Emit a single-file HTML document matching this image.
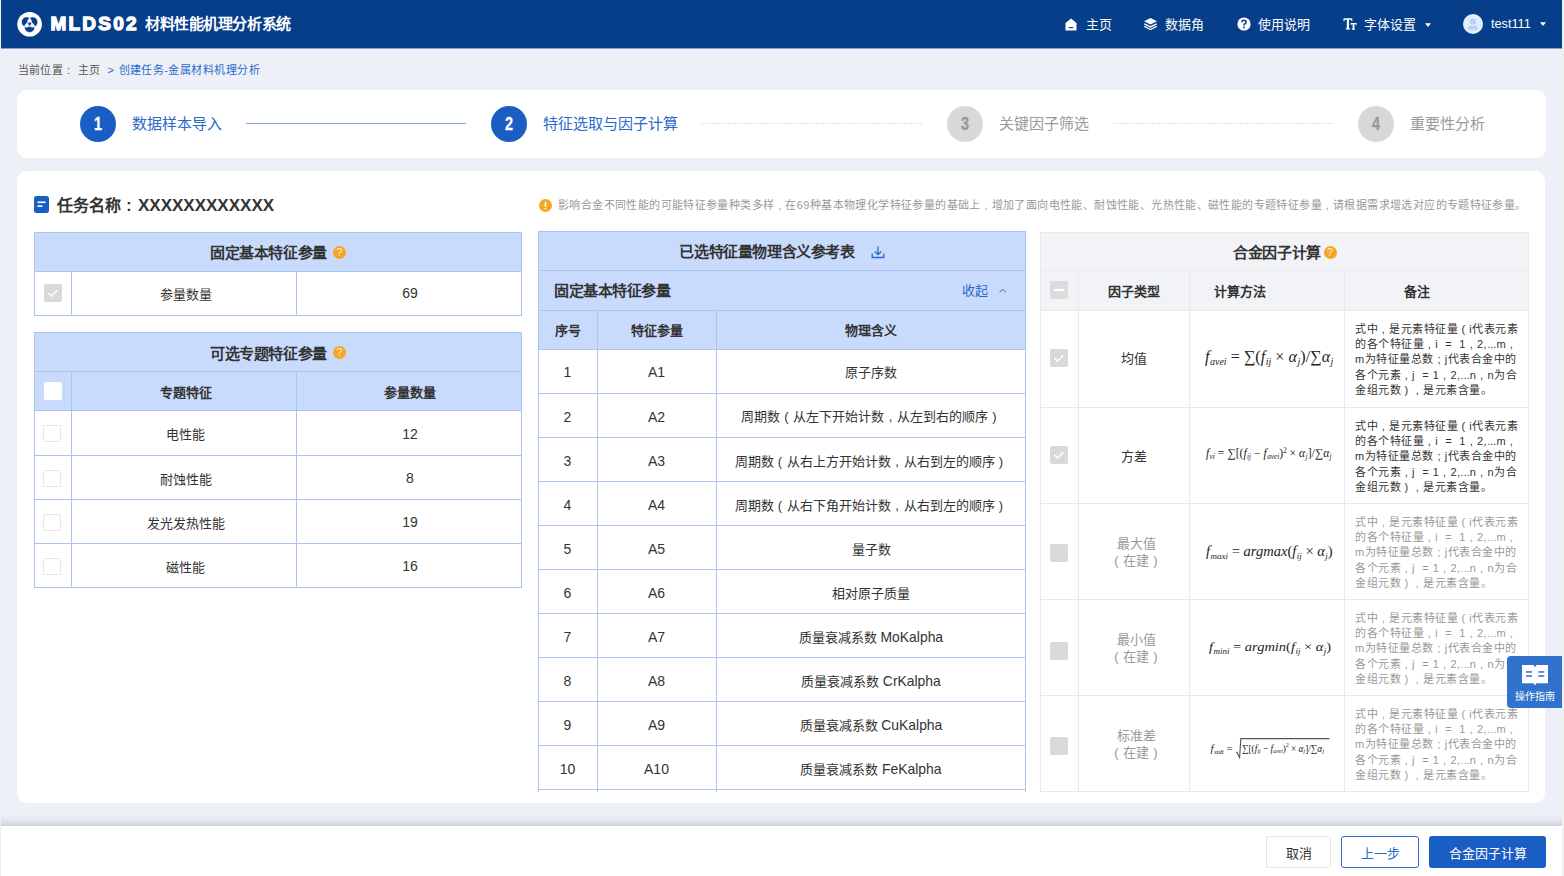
<!DOCTYPE html>
<html lang="zh-CN"><head><meta charset="utf-8">
<style>
*{margin:0;padding:0;box-sizing:border-box}
html,body{width:1564px;height:876px;overflow:hidden}
body{background:#edf0f7;font-family:"Liberation Sans",sans-serif;color:#333;position:relative}
.ab{position:absolute}
.tc{display:flex;align-items:center;justify-content:center;text-align:center;white-space:nowrap}
.b{font-weight:bold}
.qi{border-radius:50%;background:#f5a623;color:#fdf0dc;font-size:10.5px;font-weight:normal;display:flex;align-items:center;justify-content:center;line-height:1}
.cb{border-radius:2px}
.num{font-size:14px}
.fw{display:inline-block;width:1em;text-align:center;font-style:normal}
</style></head><body>

<div class="ab" style="left:0px;top:0px;width:1px;height:876px;background:#efefef;"></div>
<div class="ab" style="left:1562px;top:0px;width:2px;height:876px;background:#f0f0f0;"></div>
<div class="ab" style="left:1px;top:0px;width:1561px;height:48px;background:#063e8a;"></div>
<div class="ab" style="left:1px;top:48px;width:1561px;height:1px;background:#85a0c6;"></div>
<svg class="ab" style="left:17px;top:12px" width="25" height="25" viewBox="0 0 25 25">
<circle cx="12.6" cy="12.2" r="12.3" fill="#fff"/>
<path fill-rule="evenodd" fill="#063e8a" stroke="#fff" stroke-width="0.5" d="M14.67 10.05 A5.1 5.1 0 1 0 4.47 10.05 A5.1 5.1 0 1 0 14.67 10.05 Z M20.73 10.05 A5.1 5.1 0 1 0 10.53 10.05 A5.1 5.1 0 1 0 20.73 10.05 Z M17.70 15.30 A5.1 5.1 0 1 0 7.50 15.30 A5.1 5.1 0 1 0 17.70 15.30 Z"/>
</svg>
<div class="ab" style="left:50.5px;top:11.9px;font-size:19px;font-weight:bold;color:#fff;letter-spacing:2.2px;line-height:24px;-webkit-text-stroke:1.3px #fff">MLDS02</div>
<div class="ab" style="left:145px;top:13px;font-size:15px;letter-spacing:-0.42px;font-weight:bold;color:#fff;line-height:22px">材料性能机理分析系统</div>
<svg class="ab" style="left:1065px;top:18px" width="12" height="13" viewBox="0 0 12 13"><path d="M6 0.5 L11.5 5 L11.5 12 Q11.5 12.5 11 12.5 L1 12.5 Q0.5 12.5 0.5 12 L0.5 5 Z" fill="#fff"/><rect x="3.8" y="9" width="4.4" height="1.2" fill="#063e8a"/></svg>
<div class="ab" style="left:1086px;top:15px;font-size:13px;color:#fff;line-height:20px">主页</div>
<svg class="ab" style="left:1143px;top:17px" width="15" height="14" viewBox="0 0 15 14"><path d="M7.5 1 L14 4.3 L7.5 7.6 L1 4.3 Z" fill="#fff"/><path d="M1.3 6.8 L7.5 9.9 L13.7 6.8" stroke="#fff" stroke-width="1.3" fill="none"/><path d="M1.3 9.4 L7.5 12.5 L13.7 9.4" stroke="#fff" stroke-width="1.3" fill="none"/></svg>
<div class="ab" style="left:1165px;top:15px;font-size:13px;color:#fff;line-height:20px">数据角</div>
<svg class="ab" style="left:1237px;top:17px" width="14" height="14" viewBox="0 0 14 14"><circle cx="7" cy="7" r="6.6" fill="#fff"/><path d="M4.9 5.3 Q4.9 3.2 7 3.2 Q9.1 3.2 9.1 5.1 Q9.1 6.3 7.8 6.9 Q7 7.3 7 8.4" stroke="#063e8a" stroke-width="1.6" fill="none"/><circle cx="7" cy="10.4" r="0.95" fill="#063e8a"/></svg>
<div class="ab" style="left:1258px;top:15px;font-size:13px;color:#fff;line-height:20px">使用说明</div>
<svg class="ab" style="left:1342.5px;top:18.3px" width="15" height="12" viewBox="0 0 15 12"><path fill="#fff" d="M0.5 0.3 H9.3 V3.2 H8.5 L8.1 1.8 H6 V10.2 L7.1 10.6 V11.6 H2.7 V10.6 L3.8 10.2 V1.8 H1.7 L1.3 3.2 H0.5 Z M7.6 5.1 H13.6 V7.2 H13 L12.7 6.3 H11.4 V10.5 L12.1 10.8 V11.7 H8.9 V10.8 L9.6 10.5 V6.3 H8.5 L8.2 7.2 H7.6 Z"/></svg>
<div class="ab" style="left:1364px;top:15px;font-size:13px;color:#fff;line-height:20px">字体设置</div>
<svg class="ab" style="left:1424.5px;top:22.5px" width="6" height="4" viewBox="0 0 6 4"><path d="M0 0.2 L6 0.2 L3 3.9 Z" fill="#fff"/></svg>
<svg class="ab" style="left:1463px;top:14px" width="20" height="20" viewBox="0 0 20 20"><circle cx="10" cy="10" r="10" fill="#e3eefc"/><circle cx="10" cy="7.6" r="3.2" fill="#b9d3f7"/><path d="M4.8 15.8 Q5.2 11.6 8.3 11.3 L10 12.6 L11.7 11.3 Q14.8 11.6 15.2 15.8 Z" fill="#b9d3f7"/></svg>
<div class="ab" style="left:1491px;top:14px;font-size:12.7px;color:#fff;line-height:20px">test111</div>
<svg class="ab" style="left:1540px;top:22px" width="6" height="4" viewBox="0 0 6 4"><path d="M0 0.2 L6 0.2 L3 3.9 Z" fill="#fff"/></svg>
<div class="ab" style="left:17.5px;top:61.8px;font-size:11px;letter-spacing:0.4px;line-height:17px;color:#555;white-space:nowrap">当前位置<span class="fw">:</span></div>
<div class="ab" style="left:77.5px;top:61.8px;font-size:11px;letter-spacing:0.4px;line-height:17px;color:#555;white-space:nowrap">主页</div>
<div class="ab" style="left:107.5px;top:61.8px;font-size:11px;line-height:17px;color:#2a6acb;white-space:nowrap">&gt;</div>
<div class="ab" style="left:118.5px;top:61.8px;font-size:11px;letter-spacing:0.45px;line-height:17px;color:#2a6acb;white-space:nowrap">创建任务-金属材料机理分析</div>
<div class="ab" style="left:17px;top:90px;width:1529px;height:68px;background:#fff;border-radius:10px"></div>
<div class="ab tc" style="left:80px;top:106px;width:36px;height:36px;padding-top:1.5px;border-radius:50%;background:#1a5ec4;color:#fff;font-size:18px;font-weight:bold"><span style="display:inline-block;transform:scaleX(0.8);-webkit-text-stroke:0.3px #fff">1</span></div>
<div class="ab" style="left:132px;top:113px;font-size:15px;line-height:22px;color:#2a6acb;white-space:nowrap">数据样本导入</div>
<div class="ab tc" style="left:491px;top:106px;width:36px;height:36px;padding-top:1.5px;border-radius:50%;background:#1a5ec4;color:#fff;font-size:18px;font-weight:bold"><span style="display:inline-block;transform:scaleX(0.8);-webkit-text-stroke:0.3px #fff">2</span></div>
<div class="ab" style="left:543px;top:113px;font-size:15px;line-height:22px;color:#2a6acb;white-space:nowrap">特征选取与因子计算</div>
<div class="ab tc" style="left:947px;top:106px;width:36px;height:36px;padding-top:1.5px;border-radius:50%;background:#d8d8d8;color:#999;font-size:18px;font-weight:bold"><span style="display:inline-block;transform:scaleX(0.8);-webkit-text-stroke:0.3px #999">3</span></div>
<div class="ab" style="left:999px;top:113px;font-size:15px;line-height:22px;color:#999;white-space:nowrap">关键因子筛选</div>
<div class="ab tc" style="left:1358px;top:106px;width:36px;height:36px;padding-top:1.5px;border-radius:50%;background:#d8d8d8;color:#999;font-size:18px;font-weight:bold"><span style="display:inline-block;transform:scaleX(0.8);-webkit-text-stroke:0.3px #999">4</span></div>
<div class="ab" style="left:1410px;top:113px;font-size:15px;line-height:22px;color:#999;white-space:nowrap">重要性分析</div>
<div class="ab" style="left:246px;top:123px;width:220px;height:1px;background:#7fa6de"></div>
<svg class="ab" style="left:701.5px;top:122px" width="221" height="3"><line x1="0" y1="1.5" x2="221" y2="1.5" stroke="#cfcfcf" stroke-width="1.2" stroke-dasharray="1.3 1.96"/></svg>
<svg class="ab" style="left:1112.5px;top:122px" width="221" height="3"><line x1="0" y1="1.5" x2="221" y2="1.5" stroke="#cfcfcf" stroke-width="1.2" stroke-dasharray="1.3 1.96"/></svg>
<div class="ab" style="left:17px;top:171px;width:1528px;height:632px;background:#fff;border-radius:10px"></div>
<svg class="ab" style="left:34px;top:196px" width="15" height="17" viewBox="0 0 15 17"><rect x="0" y="0" width="15" height="17" rx="2.5" fill="#1a5ec4"/><rect x="3.5" y="5.5" width="8" height="1.6" fill="#fff"/><rect x="3.5" y="9.3" width="5" height="1.6" fill="#fff"/></svg>
<div class="ab" style="left:57px;top:194.8px;font-size:16px;font-weight:bold;line-height:22px;color:#333;white-space:nowrap">任务名称<span class="fw">:</span><span style="font-size:17px;margin-left:1px">XXXXXXXXXXXX</span></div>
<svg class="ab" style="left:539px;top:199px" width="13" height="13" viewBox="0 0 13 13"><circle cx="6.5" cy="6.5" r="6.5" fill="#f5a623"/><rect x="5.7" y="2.8" width="1.6" height="5" rx="0.6" fill="#fff"/><circle cx="6.5" cy="9.6" r="0.9" fill="#fff"/></svg>
<div class="ab" style="left:558px;top:197px;font-size:11px;letter-spacing:0.39px;line-height:17px;color:#999;white-space:nowrap">影响合金不同性能的可能特征参量种类多样<i class=fw>,</i>在69种基本物理化学特征参量的基础上<i class=fw>,</i>增加了面向电性能、耐蚀性能、光热性能、磁性能的专题特征参量<i class=fw>,</i>请根据需求增选对应的专题特征参量。</div>
<div class="ab" style="left:34px;top:232px;width:488px;height:39px;background:#c9dbfd;"></div>
<div class="ab" style="left:34px;top:232px;width:488px;height:1px;background:#acc4f0"></div>
<div class="ab" style="left:34px;top:271px;width:488px;height:1px;background:#acc4f0"></div>
<div class="ab" style="left:34px;top:315px;width:488px;height:1px;background:#acc4f0"></div>
<div class="ab" style="left:34px;top:232px;width:1px;height:84px;background:#acc4f0"></div>
<div class="ab" style="left:521px;top:232px;width:1px;height:84px;background:#acc4f0"></div>
<div class="ab" style="left:71px;top:271px;width:1px;height:44px;background:#acc4f0"></div>
<div class="ab" style="left:296px;top:271px;width:1px;height:44px;background:#acc4f0"></div>
<div class="ab tc b" style="left:34px;top:232px;width:488px;height:39px;font-size:15px;letter-spacing:-0.45px;padding-right:13px"><span>固定基本特征参量<span style="display:inline-block;width:6px"></span></span></div>
<div class="ab qi" style="left:333px;top:245.7px;width:13px;height:13px">?</div>
<div class="ab cb" style="left:44px;top:284px;width:18px;height:18px;background:#d9d9d9"><svg width="18" height="18" viewBox="0 0 18 18"><path d="M4.5 9.2 L7.6 12 L13.3 6.4" stroke="#fff" stroke-width="1.6" fill="none"/></svg></div>
<div class="ab tc " style="left:73px;top:271px;width:225px;height:44px;font-size:13px"><span>参量数量</span></div>
<div class="ab tc num" style="left:297px;top:271px;width:226px;height:44px;"><span>69</span></div>
<div class="ab" style="left:34px;top:332px;width:488px;height:78px;background:#c9dbfd;"></div>
<div class="ab" style="left:34px;top:332px;width:488px;height:1px;background:#acc4f0"></div>
<div class="ab" style="left:34px;top:371px;width:488px;height:1px;background:#acc4f0"></div>
<div class="ab" style="left:34px;top:410px;width:488px;height:1px;background:#acc4f0"></div>
<div class="ab" style="left:34px;top:455px;width:488px;height:1px;background:#acc4f0"></div>
<div class="ab" style="left:34px;top:499px;width:488px;height:1px;background:#acc4f0"></div>
<div class="ab" style="left:34px;top:543px;width:488px;height:1px;background:#acc4f0"></div>
<div class="ab" style="left:34px;top:587px;width:488px;height:1px;background:#acc4f0"></div>
<div class="ab" style="left:34px;top:332px;width:1px;height:256px;background:#acc4f0"></div>
<div class="ab" style="left:521px;top:332px;width:1px;height:256px;background:#acc4f0"></div>
<div class="ab" style="left:71px;top:371px;width:1px;height:216px;background:#acc4f0"></div>
<div class="ab" style="left:296px;top:371px;width:1px;height:216px;background:#acc4f0"></div>
<div class="ab tc b" style="left:34px;top:333px;width:488px;height:39px;font-size:15px;letter-spacing:-0.45px;padding-right:13px"><span>可选专题特征参量<span style="display:inline-block;width:6px"></span></span></div>
<div class="ab qi" style="left:333px;top:345.7px;width:13px;height:13px">?</div>
<div class="ab cb" style="left:44px;top:382px;width:18px;height:18px;background:#fff"></div>
<div class="ab tc b" style="left:73px;top:372px;width:225px;height:39px;font-size:13px"><span>专题特征</span></div>
<div class="ab tc b" style="left:297px;top:372px;width:226px;height:39px;font-size:13px"><span>参量数量</span></div>
<div class="ab cb" style="left:43.3px;top:424.5px;width:17.5px;height:17.5px;background:#fff;border:1px solid #e6e6e6"></div>
<div class="ab tc " style="left:73px;top:411px;width:225px;height:45px;font-size:13px"><span>电性能</span></div>
<div class="ab tc num" style="left:297px;top:411px;width:226px;height:45px;"><span>12</span></div>
<div class="ab cb" style="left:43.3px;top:469.5px;width:17.5px;height:17.5px;background:#fff;border:1px solid #e6e6e6"></div>
<div class="ab tc " style="left:73px;top:456px;width:225px;height:44px;font-size:13px"><span>耐蚀性能</span></div>
<div class="ab tc num" style="left:297px;top:456px;width:226px;height:44px;"><span>8</span></div>
<div class="ab cb" style="left:43.3px;top:513.5px;width:17.5px;height:17.5px;background:#fff;border:1px solid #e6e6e6"></div>
<div class="ab tc " style="left:73px;top:500px;width:225px;height:44px;font-size:13px"><span>发光发热性能</span></div>
<div class="ab tc num" style="left:297px;top:500px;width:226px;height:44px;"><span>19</span></div>
<div class="ab cb" style="left:43.3px;top:557.5px;width:17.5px;height:17.5px;background:#fff;border:1px solid #e6e6e6"></div>
<div class="ab tc " style="left:73px;top:544px;width:225px;height:44px;font-size:13px"><span>磁性能</span></div>
<div class="ab tc num" style="left:297px;top:544px;width:226px;height:44px;"><span>16</span></div>
<div class="ab" style="left:538px;top:231px;width:488px;height:118px;background:#c9dbfd;"></div>
<div class="ab" style="left:538px;top:231px;width:488px;height:1px;background:#acc4f0"></div>
<div class="ab" style="left:538px;top:270px;width:488px;height:1px;background:#acc4f0"></div>
<div class="ab" style="left:538px;top:310px;width:488px;height:1px;background:#acc4f0"></div>
<div class="ab" style="left:538px;top:349px;width:488px;height:1px;background:#acc4f0"></div>
<div class="ab" style="left:538px;top:393px;width:488px;height:1px;background:#acc4f0"></div>
<div class="ab" style="left:538px;top:437px;width:488px;height:1px;background:#acc4f0"></div>
<div class="ab" style="left:538px;top:481px;width:488px;height:1px;background:#acc4f0"></div>
<div class="ab" style="left:538px;top:525px;width:488px;height:1px;background:#acc4f0"></div>
<div class="ab" style="left:538px;top:569px;width:488px;height:1px;background:#acc4f0"></div>
<div class="ab" style="left:538px;top:613px;width:488px;height:1px;background:#acc4f0"></div>
<div class="ab" style="left:538px;top:657px;width:488px;height:1px;background:#acc4f0"></div>
<div class="ab" style="left:538px;top:701px;width:488px;height:1px;background:#acc4f0"></div>
<div class="ab" style="left:538px;top:745px;width:488px;height:1px;background:#acc4f0"></div>
<div class="ab" style="left:538px;top:789px;width:488px;height:1px;background:#acc4f0"></div>
<div class="ab" style="left:538px;top:231px;width:1px;height:561px;background:#acc4f0"></div>
<div class="ab" style="left:1025px;top:231px;width:1px;height:561px;background:#acc4f0"></div>
<div class="ab" style="left:597px;top:310px;width:1px;height:482px;background:#acc4f0"></div>
<div class="ab" style="left:716px;top:310px;width:1px;height:482px;background:#acc4f0"></div>
<div class="ab tc b" style="left:538px;top:231px;width:488px;height:39px;font-size:15px;letter-spacing:-0.4px"><span>已选特征量物理含义参考表<span style="display:inline-block;width:30px"></span></span></div>
<svg class="ab" style="left:871px;top:245px" width="14" height="14" viewBox="0 0 14 14"><path d="M7 1.5 L7 9.5 M3.8 6.5 L7 9.6 L10.2 6.5 M1.2 8.5 L1.2 12.5 L12.8 12.5 L12.8 8.5" stroke="#2a6acb" stroke-width="1.3" fill="none"/></svg>
<div class="ab" style="left:554px;top:280px;font-size:15px;letter-spacing:-0.45px;font-weight:bold;line-height:22px">固定基本特征参量</div>
<div class="ab" style="left:962px;top:282px;font-size:13px;line-height:18px;color:#2a6acb">收起</div>
<svg class="ab" style="left:999px;top:288px" width="7" height="5" viewBox="0 0 7 5"><path d="M0.6 4.3 L3.7 1.3 L6.8 4.3" stroke="#555" stroke-width="0.9" fill="none"/></svg>
<div class="ab tc b" style="left:538px;top:310px;width:59px;height:39px;font-size:13px"><span>序号</span></div>
<div class="ab tc b" style="left:597px;top:310px;width:119px;height:39px;font-size:13px"><span>特征参量</span></div>
<div class="ab tc b" style="left:716px;top:310px;width:310px;height:39px;font-size:13px"><span>物理含义</span></div>
<div class="ab tc num" style="left:538px;top:349.5px;width:59px;height:44.0px;"><span>1</span></div>
<div class="ab tc num" style="left:597px;top:349.5px;width:119px;height:44.0px;"><span>A1</span></div>
<div class="ab tc " style="left:716px;top:349.5px;width:310px;height:44.0px;font-size:13px"><span>原子序数</span></div>
<div class="ab tc num" style="left:538px;top:395px;width:59px;height:44px;"><span>2</span></div>
<div class="ab tc num" style="left:597px;top:395px;width:119px;height:44px;"><span>A2</span></div>
<div class="ab tc " style="left:716px;top:393px;width:310px;height:44px;font-size:13px"><span>周期数<i class=fw>(</i>从左下开始计数<i class=fw>,</i>从左到右的顺序<i class=fw>)</i></span></div>
<div class="ab tc num" style="left:538px;top:439px;width:59px;height:44px;"><span>3</span></div>
<div class="ab tc num" style="left:597px;top:439px;width:119px;height:44px;"><span>A3</span></div>
<div class="ab tc " style="left:716px;top:438px;width:310px;height:44px;font-size:13px"><span>周期数<i class=fw>(</i>从右上方开始计数<i class=fw>,</i>从右到左的顺序<i class=fw>)</i></span></div>
<div class="ab tc num" style="left:538px;top:483px;width:59px;height:44px;"><span>4</span></div>
<div class="ab tc num" style="left:597px;top:483px;width:119px;height:44px;"><span>A4</span></div>
<div class="ab tc " style="left:716px;top:482px;width:310px;height:44px;font-size:13px"><span>周期数<i class=fw>(</i>从右下角开始计数<i class=fw>,</i>从右到左的顺序<i class=fw>)</i></span></div>
<div class="ab tc num" style="left:538px;top:527px;width:59px;height:44px;"><span>5</span></div>
<div class="ab tc num" style="left:597px;top:527px;width:119px;height:44px;"><span>A5</span></div>
<div class="ab tc " style="left:716px;top:526px;width:310px;height:44px;font-size:13px"><span>量子数</span></div>
<div class="ab tc num" style="left:538px;top:571px;width:59px;height:44px;"><span>6</span></div>
<div class="ab tc num" style="left:597px;top:571px;width:119px;height:44px;"><span>A6</span></div>
<div class="ab tc " style="left:716px;top:570px;width:310px;height:44px;font-size:13px"><span>相对原子质量</span></div>
<div class="ab tc num" style="left:538px;top:615px;width:59px;height:44px;"><span>7</span></div>
<div class="ab tc num" style="left:597px;top:615px;width:119px;height:44px;"><span>A7</span></div>
<div class="ab tc " style="left:716px;top:614px;width:310px;height:44px;font-size:13px"><span>质量衰减系数 <span style="font-size:13.9px">MoKalpha</span></span></div>
<div class="ab tc num" style="left:538px;top:659px;width:59px;height:44px;"><span>8</span></div>
<div class="ab tc num" style="left:597px;top:659px;width:119px;height:44px;"><span>A8</span></div>
<div class="ab tc " style="left:716px;top:658px;width:310px;height:44px;font-size:13px"><span>质量衰减系数 <span style="font-size:13.9px">CrKalpha</span></span></div>
<div class="ab tc num" style="left:538px;top:703px;width:59px;height:44px;"><span>9</span></div>
<div class="ab tc num" style="left:597px;top:703px;width:119px;height:44px;"><span>A9</span></div>
<div class="ab tc " style="left:716px;top:702px;width:310px;height:44px;font-size:13px"><span>质量衰减系数 <span style="font-size:13.9px">CuKalpha</span></span></div>
<div class="ab tc num" style="left:538px;top:747px;width:59px;height:44px;"><span>10</span></div>
<div class="ab tc num" style="left:597px;top:747px;width:119px;height:44px;"><span>A10</span></div>
<div class="ab tc " style="left:716px;top:746px;width:310px;height:44px;font-size:13px"><span>质量衰减系数 <span style="font-size:13.9px">FeKalpha</span></span></div>
<div class="ab" style="left:1040px;top:232px;width:489px;height:78px;background:#f2f3f6;"></div>
<div class="ab" style="left:1040px;top:232px;width:489px;height:1px;background:#e8e9ec"></div>
<div class="ab" style="left:1040px;top:270px;width:489px;height:1px;background:#e8e9ec"></div>
<div class="ab" style="left:1040px;top:310px;width:489px;height:1px;background:#e8e9ec"></div>
<div class="ab" style="left:1040px;top:407px;width:489px;height:1px;background:#e8e9ec"></div>
<div class="ab" style="left:1040px;top:503px;width:489px;height:1px;background:#e8e9ec"></div>
<div class="ab" style="left:1040px;top:599px;width:489px;height:1px;background:#e8e9ec"></div>
<div class="ab" style="left:1040px;top:695px;width:489px;height:1px;background:#e8e9ec"></div>
<div class="ab" style="left:1040px;top:791px;width:489px;height:1px;background:#e8e9ec"></div>
<div class="ab" style="left:1040px;top:232px;width:1px;height:560px;background:#e8e9ec"></div>
<div class="ab" style="left:1528px;top:232px;width:1px;height:560px;background:#e8e9ec"></div>
<div class="ab" style="left:1078px;top:270px;width:1px;height:521px;background:#e8e9ec"></div>
<div class="ab" style="left:1189px;top:270px;width:1px;height:521px;background:#e8e9ec"></div>
<div class="ab" style="left:1344px;top:270px;width:1px;height:521px;background:#e8e9ec"></div>
<div class="ab tc b" style="left:1040px;top:232px;width:489px;height:38px;font-size:15px;letter-spacing:-0.3px"><span>合金因子计算<span style="display:inline-block;width:15px"></span></span></div>
<div class="ab qi" style="left:1323.5px;top:245.5px;width:13px;height:13px">?</div>
<div class="ab cb" style="left:1050px;top:281px;width:18px;height:18px;background:#dcdcdc"><div style="position:absolute;left:4px;top:8px;width:10px;height:1.5px;background:#fff"></div></div>
<div class="ab tc b" style="left:1078px;top:270px;width:111px;height:40px;font-size:13px"><span>因子类型</span></div>
<div class="ab tc b" style="left:1189px;top:270px;width:155px;height:40px;font-size:13px"><span><span style="padding-right:54px">计算方法</span></span></div>
<div class="ab tc b" style="left:1344px;top:270px;width:145px;height:40px;font-size:13px"><span>备注</span></div>
<div class="ab cb" style="left:1050px;top:349px;width:18px;height:18px;background:#d9d9d9"><svg width="18" height="18" viewBox="0 0 18 18"><path d="M4.5 9.2 L7.6 12 L13.3 6.4" stroke="#fff" stroke-width="1.6" fill="none"/></svg></div>
<div class="ab tc " style="left:1078px;top:310px;width:111px;height:97px;font-size:13px;line-height:17.5px;color:#333"><span>均值</span></div>
<div class="ab" style="left:1355px;top:321.5px;font-size:11px;letter-spacing:0.52px;line-height:15.4px;color:#333;white-space:nowrap">式中<i class=fw>,</i>是元素特征量<i class=fw>(</i>i代表元素<br>的各个特征量<i class=fw>,</i>i&nbsp;&nbsp;=&nbsp;&nbsp;1<i class=fw>,</i>2,<span style=letter-spacing:0>...</span>m<i class=fw>,</i><br>m为特征量总数<i class=fw>;</i>j代表合金中的<br>各个元素<i class=fw>,</i>j&nbsp;&nbsp;=&nbsp;1<i class=fw>,</i>2,<span style=letter-spacing:0>...</span>n<i class=fw>,</i>n为合<br>金组元数<i class=fw>)</i><i class=fw>,</i>是元素含量。</div>
<div class="ab cb" style="left:1050px;top:446px;width:18px;height:18px;background:#d9d9d9"><svg width="18" height="18" viewBox="0 0 18 18"><path d="M4.5 9.2 L7.6 12 L13.3 6.4" stroke="#fff" stroke-width="1.6" fill="none"/></svg></div>
<div class="ab tc " style="left:1078px;top:408.5px;width:111px;height:96.0px;font-size:13px;line-height:17.5px;color:#333"><span>方差</span></div>
<div class="ab" style="left:1355px;top:418.5px;font-size:11px;letter-spacing:0.52px;line-height:15.4px;color:#333;white-space:nowrap">式中<i class=fw>,</i>是元素特征量<i class=fw>(</i>i代表元素<br>的各个特征量<i class=fw>,</i>i&nbsp;&nbsp;=&nbsp;&nbsp;1<i class=fw>,</i>2,<span style=letter-spacing:0>...</span>m<i class=fw>,</i><br>m为特征量总数<i class=fw>;</i>j代表合金中的<br>各个元素<i class=fw>,</i>j&nbsp;&nbsp;=&nbsp;1<i class=fw>,</i>2,<span style=letter-spacing:0>...</span>n<i class=fw>,</i>n为合<br>金组元数<i class=fw>)</i><i class=fw>,</i>是元素含量。</div>
<div class="ab cb" style="left:1050px;top:543.5px;width:18px;height:18px;background:#d9d9d9"></div>
<div class="ab tc " style="left:1080.5px;top:504px;width:111.0px;height:96px;font-size:13px;line-height:17.5px;color:#999"><span>最大值<br><i class=fw>(</i>在建<i class=fw>)</i></span></div>
<div class="ab" style="left:1355px;top:514.5px;font-size:11px;letter-spacing:0.52px;line-height:15.4px;color:#999;white-space:nowrap">式中<i class=fw>,</i>是元素特征量<i class=fw>(</i>i代表元素<br>的各个特征量<i class=fw>,</i>i&nbsp;&nbsp;=&nbsp;&nbsp;1<i class=fw>,</i>2,<span style=letter-spacing:0>...</span>m<i class=fw>,</i><br>m为特征量总数<i class=fw>;</i>j代表合金中的<br>各个元素<i class=fw>,</i>j&nbsp;&nbsp;=&nbsp;1<i class=fw>,</i>2,<span style=letter-spacing:0>...</span>n<i class=fw>,</i>n为合<br>金组元数<i class=fw>)</i><i class=fw>,</i>是元素含量。</div>
<div class="ab cb" style="left:1050px;top:641.5px;width:18px;height:18px;background:#d9d9d9"></div>
<div class="ab tc " style="left:1080.5px;top:600px;width:111.0px;height:96px;font-size:13px;line-height:17.5px;color:#999"><span>最小值<br><i class=fw>(</i>在建<i class=fw>)</i></span></div>
<div class="ab" style="left:1355px;top:610.5px;font-size:11px;letter-spacing:0.52px;line-height:15.4px;color:#999;white-space:nowrap">式中<i class=fw>,</i>是元素特征量<i class=fw>(</i>i代表元素<br>的各个特征量<i class=fw>,</i>i&nbsp;&nbsp;=&nbsp;&nbsp;1<i class=fw>,</i>2,<span style=letter-spacing:0>...</span>m<i class=fw>,</i><br>m为特征量总数<i class=fw>;</i>j代表合金中的<br>各个元素<i class=fw>,</i>j&nbsp;&nbsp;=&nbsp;1<i class=fw>,</i>2,<span style=letter-spacing:0>...</span>n<i class=fw>,</i>n为合<br>金组元数<i class=fw>)</i><i class=fw>,</i>是元素含量。</div>
<div class="ab cb" style="left:1050px;top:737px;width:18px;height:18px;background:#d9d9d9"></div>
<div class="ab tc " style="left:1080.5px;top:696px;width:111.0px;height:96px;font-size:13px;line-height:17.5px;color:#999"><span>标准差<br><i class=fw>(</i>在建<i class=fw>)</i></span></div>
<div class="ab" style="left:1355px;top:706.5px;font-size:11px;letter-spacing:0.52px;line-height:15.4px;color:#999;white-space:nowrap">式中<i class=fw>,</i>是元素特征量<i class=fw>(</i>i代表元素<br>的各个特征量<i class=fw>,</i>i&nbsp;&nbsp;=&nbsp;&nbsp;1<i class=fw>,</i>2,<span style=letter-spacing:0>...</span>m<i class=fw>,</i><br>m为特征量总数<i class=fw>;</i>j代表合金中的<br>各个元素<i class=fw>,</i>j&nbsp;&nbsp;=&nbsp;1<i class=fw>,</i>2,<span style=letter-spacing:0>...</span>n<i class=fw>,</i>n为合<br>金组元数<i class=fw>)</i><i class=fw>,</i>是元素含量。</div>
<div class="ab fm" style="left:1204.5px;top:347.8px;font-size:17px;line-height:1;font-family:'Liberation Serif',serif;color:#222;white-space:nowrap;transform-origin:0 0;transform:scale(0.95,0.98)"><i>f</i><i style="font-size:0.62em;position:relative;top:0.28em;margin-left:0.05em">avei</i> = ∑(<i>f</i><i style="font-size:0.62em;position:relative;top:0.28em;margin-left:0.05em">ij</i> × <i>α</i><i style="font-size:0.62em;position:relative;top:0.28em;margin-left:0.05em">j</i>)/∑<i>α</i><i style="font-size:0.62em;position:relative;top:0.28em;margin-left:0.05em">j</i></div>
<div class="ab fm" style="left:1206px;top:447px;font-size:13px;line-height:1;font-family:'Liberation Serif',serif;color:#222;white-space:nowrap;transform-origin:0 0;transform:scale(0.9,0.92)"><i>f</i><i style="font-size:0.62em;position:relative;top:0.28em;margin-left:0.05em">vi</i> = ∑[(<i>f</i><i style="font-size:0.62em;position:relative;top:0.28em;margin-left:0.05em">ij</i> − <i>f</i><i style="font-size:0.62em;position:relative;top:0.28em;margin-left:0.05em">avei</i>)<span style="font-size:0.6em;position:relative;top:-0.7em">2</span> × <i>α</i><i style="font-size:0.62em;position:relative;top:0.28em;margin-left:0.05em">j</i>]/∑<i>α</i><i style="font-size:0.62em;position:relative;top:0.28em;margin-left:0.05em">j</i></div>
<div class="ab fm" style="left:1205.5px;top:545px;font-size:15px;line-height:1;font-family:'Liberation Serif',serif;color:#222;white-space:nowrap;transform-origin:0 0;transform:scale(0.97,0.92)"><i>f</i><i style="font-size:0.62em;position:relative;top:0.28em;margin-left:0.05em">maxi</i> = <i>argmax</i>(<i>f</i><i style="font-size:0.62em;position:relative;top:0.28em;margin-left:0.05em">ij</i> × <i>α</i><i style="font-size:0.62em;position:relative;top:0.28em;margin-left:0.05em">j</i>)</div>
<div class="ab fm" style="left:1208.5px;top:641.2px;font-size:15px;line-height:1;font-family:'Liberation Serif',serif;color:#222;white-space:nowrap;transform-origin:0 0;transform:scale(0.965,0.87)"><i>f</i><i style="font-size:0.62em;position:relative;top:0.28em;margin-left:0.05em">mini</i> = <i>argmin</i>(<i>f</i><i style="font-size:0.62em;position:relative;top:0.28em;margin-left:0.05em">ij</i> × <i>α</i><i style="font-size:0.62em;position:relative;top:0.28em;margin-left:0.05em">j</i>)</div>
<div class="ab fm" style="left:1210.5px;top:743px;font-size:11px;line-height:1;font-family:'Liberation Serif',serif;color:#222;white-space:nowrap;transform-origin:0 0;transform:scale(1.0,1.0)"><i>f</i><i style="font-size:0.62em;position:relative;top:0.28em;margin-left:0.05em">stdi</i> =</div>
<svg class="ab" style="left:1235px;top:737px" width="96" height="23" viewBox="0 0 96 23"><path d="M1.2 15.6 L1.9 15.2 L4.6 20.6 L5.8 1.6 L94.4 1.6" stroke="#555" stroke-width="1.1" fill="none"/></svg>
<div class="ab fm" style="left:1242px;top:742.5px;font-size:11.5px;line-height:1;font-family:'Liberation Serif',serif;color:#222;white-space:nowrap;transform-origin:0 0;transform:scale(0.8,0.95)">∑[(<i>f</i><i style="font-size:0.62em;position:relative;top:0.28em;margin-left:0.05em">ij</i> − <i>f</i><i style="font-size:0.62em;position:relative;top:0.28em;margin-left:0.05em">avei</i>)<span style="font-size:0.6em;position:relative;top:-0.7em">2</span> × <i>α</i><i style="font-size:0.62em;position:relative;top:0.28em;margin-left:0.05em">j</i>]/∑<i>α</i><i style="font-size:0.62em;position:relative;top:0.28em;margin-left:0.05em">j</i></div>
<div class="ab" style="left:1px;top:814px;width:1561px;height:12px;background:linear-gradient(180deg,rgba(200,205,218,0) 0%,rgba(200,205,218,0.25) 50%,rgba(195,200,212,0.75) 100%)"></div>
<div class="ab" style="left:1px;top:826px;width:1561px;height:50px;background:#fff;"></div>
<div class="ab tc" style="left:1266px;top:836px;width:65px;height:32px;border:1px solid #e5e5e5;border-radius:3px;background:#fff;font-size:13px;color:#333">取消</div>
<div class="ab tc" style="left:1341px;top:836px;width:78px;height:32px;border:1px solid #2a6acb;border-radius:3px;background:#fff;font-size:13px;color:#2a6acb">上一步</div>
<div class="ab tc" style="left:1429px;top:836px;width:117px;height:32px;border-radius:3px;background:#1a5ec4;font-size:13px;color:#fff">合金因子计算</div>
<div class="ab" style="left:1507px;top:656px;width:55px;height:52px;background:#3173cc;border-radius:4px 0 0 4px"></div>
<svg class="ab" style="left:1522px;top:665px" width="26" height="21" viewBox="0 0 26 21"><path d="M0 0 L11.5 0 L13 2.3 L14.5 0 L26 0 L26 18.3 L14.6 18.3 L13 20.2 L11.4 18.3 L0 18.3 Z" fill="#fff"/><rect x="4" y="6.2" width="6" height="1.5" fill="#3173cc"/><rect x="4" y="10.3" width="6" height="1.5" fill="#3173cc"/><rect x="16.3" y="6.2" width="6" height="1.5" fill="#3173cc"/><rect x="16.3" y="10.3" width="6" height="1.5" fill="#3173cc"/></svg>
<div class="ab tc" style="left:1507px;top:688px;width:55px;height:14px;font-size:10px;color:#fff">操作指南</div>
</body></html>
